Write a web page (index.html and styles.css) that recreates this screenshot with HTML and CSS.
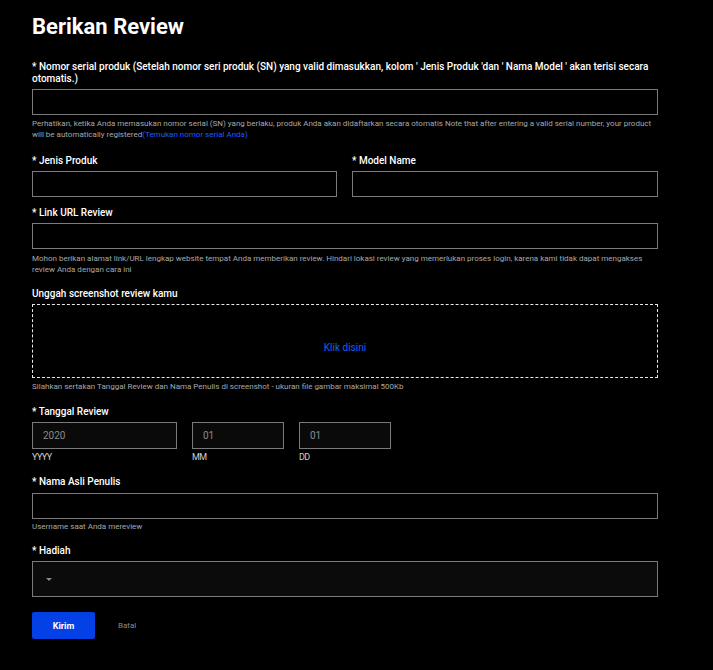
FILE: index.html
```html
<!DOCTYPE html>
<html lang="id">
<head>
<meta charset="utf-8">
<title>Berikan Review</title>
<link rel="stylesheet" href="styles.css">
</head>
<body>
<main class="page">
  <h1 class="title">Berikan Review</h1>

  <div class="field f-serial">
    <label class="label">* Nomor serial produk (Setelah nomor seri produk (SN) yang valid dimasukkan, kolom ' Jenis Produk 'dan ' Nama Model ' akan terisi secara otomatis.)</label>
    <div class="input"></div>
    <p class="help">Perhatikan, ketika Anda memasukan nomor serial (SN) yang berlaku, produk Anda akan didaftarkan secara otomatis Note that after entering a valid serial number, your product will be automatically registered<a class="link" href="#">(Temukan nomor serial Anda)</a></p>
  </div>

  <div class="row2">
    <div class="field">
      <label class="label">* Jenis Produk</label>
      <div class="input"></div>
    </div>
    <div class="field">
      <label class="label">* Model Name</label>
      <div class="input"></div>
    </div>
  </div>

  <div class="field f-link">
    <label class="label">* Link URL Review</label>
    <div class="input"></div>
    <p class="help">Mohon berikan alamat link/URL lengkap website tempat Anda memberikan review. Hindari lokasi review yang memerlukan proses login, karena kami tidak dapat mengakses review Anda dengan cara ini</p>
  </div>

  <div class="field f-upload">
    <label class="label">Unggah screenshot review kamu</label>
    <div class="upload"><span class="upload-link">Klik disini</span></div>
    <p class="help">Silahkan sertakan Tanggal Review dan Nama Penulis di screenshot - ukuran file gambar maksimal 500Kb</p>
  </div>

  <div class="field f-date">
    <label class="label">* Tanggal Review</label>
    <div class="dates">
      <div class="date d-year"><div class="input date-input">2020</div><span class="date-cap">YYYY</span></div>
      <div class="date d-mm"><div class="input date-input">01</div><span class="date-cap">MM</span></div>
      <div class="date d-dd"><div class="input date-input">01</div><span class="date-cap">DD</span></div>
    </div>
  </div>

  <div class="field f-name">
    <label class="label">* Nama Asli Penulis</label>
    <div class="input"></div>
    <p class="help">Username saat Anda mereview</p>
  </div>

  <div class="field f-gift">
    <label class="label">* Hadiah</label>
    <div class="select"><span class="caret"></span></div>
  </div>

  <div class="actions">
    <button class="btn-submit" type="button">Kirim</button>
    <span class="btn-cancel">Batal</span>
  </div>
</main>
</body>
</html>
```

FILE: styles.css
```css
html, body {
  margin: 0;
  padding: 0;
  background: #000;
}
body {
  font-family: Roboto, "Liberation Sans", Arial, sans-serif;
  color: #fff;
}
.page {
  width: 626px;
  padding: 14px 0 30px 32px;
}
.title {
  margin: 0;
  font-size: 22px;
  line-height: 26px;
  font-weight: 700;
}
.field {
  display: flex;
  flex-direction: column;
}
.label {
  font-size: 10px;
  line-height: 12px;
  font-weight: 500;
  margin-bottom: 4.5px;
}
.input {
  height: 26px;
  box-sizing: border-box;
  border: 1px solid #7a7a7a;
  background: #000;
}
.help {
  margin: 3.5px 0 0;
  font-size: 8px;
  line-height: 11px;
  color: #a8a8a8;
}
.link {
  color: #1a5cff;
  text-decoration: none;
}
.f-serial { margin-top: 21px; }
.f-serial .label { margin-bottom: 3.8px; }
.row2 {
  display: grid;
  grid-template-columns: 305px 306px;
  gap: 15px;
  margin-top: 14.5px;
}
.f-link { margin-top: 9.5px; }
.f-upload { margin-top: 13px; }
.f-upload .label { margin-bottom: 4px; }
.upload {
  height: 74px;
  box-sizing: border-box;
  border: 1px dashed #e8e8e8;
  display: flex;
  justify-content: center;
  padding-top: 37px;
}
.upload-link {
  color: #1060ff;
  font-size: 10px;
  line-height: 12px;
}
.f-date { margin-top: 13.5px; }
.dates {
  display: flex;
  gap: 15px;
}
.date {
  display: flex;
  flex-direction: column;
}
.d-year { width: 145px; }
.d-mm { width: 92px; }
.d-dd { width: 92px; }
.date-input {
  height: 27px;
  background: #0a0a0a;
  color: #8a8a8a;
  font-size: 10px;
  line-height: 25px;
  padding-left: 10px;
}
.date-cap {
  margin-top: 3px;
  font-size: 9px;
  line-height: 10px;
  color: #d0d0d0;
  letter-spacing: -0.6px;
}
.f-name { margin-top: 14px; }
.f-name .help { margin-top: 2.5px; }
.f-gift { margin-top: 13px; }
.f-gift .label { margin-bottom: 4px; }
.select {
  height: 36px;
  box-sizing: border-box;
  border: 1px solid #7a7a7a;
  background: #0b0b0b;
  display: flex;
  align-items: center;
  padding-left: 13px;
}
.caret {
  width: 0;
  height: 0;
  border-left: 3px solid transparent;
  border-right: 3px solid transparent;
  border-top: 3px solid #8a8a8a;
}
.actions {
  display: flex;
  align-items: center;
  margin-top: 15px;
  gap: 23px;
}
.btn-submit {
  width: 63px;
  height: 27px;
  border: 0;
  border-radius: 2px;
  background: #0340e6;
  color: #fff;
  font-family: Roboto, "Liberation Sans", Arial, sans-serif;
  font-size: 9px;
  font-weight: 700;
  padding: 0;
}
.btn-cancel {
  font-size: 8px;
  color: #8a8a8a;
}
```
